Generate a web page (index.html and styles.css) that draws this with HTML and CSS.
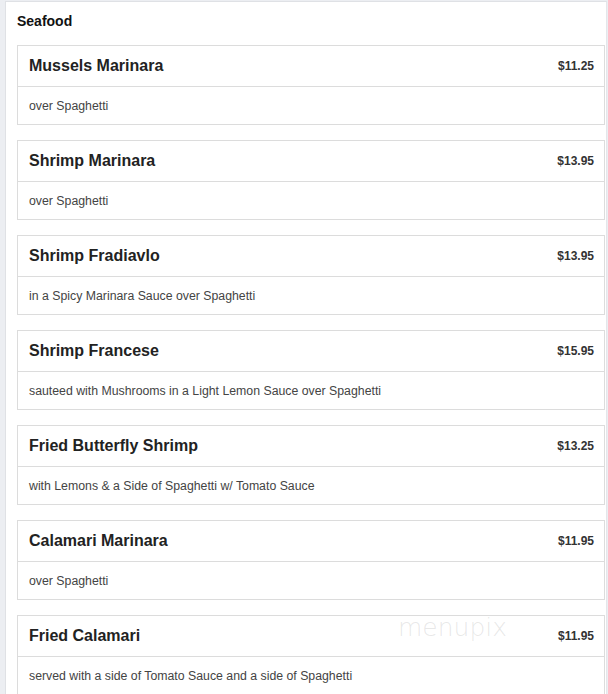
FILE: index.html
```html
<!DOCTYPE html>
<html>
<head>
<meta charset="utf-8">
<link rel="stylesheet" href="styles.css">
</head>
<body>
<div class="page">
  <div class="panel">
    <h2 class="section-title">Seafood</h2>
    <div class="items">
      <div class="card">
        <div class="card-head"><span class="name">Mussels Marinara</span><span class="price">$11.25</span></div>
        <div class="card-body">over Spaghetti</div>
      </div>
      <div class="card">
        <div class="card-head"><span class="name">Shrimp Marinara</span><span class="price">$13.95</span></div>
        <div class="card-body">over Spaghetti</div>
      </div>
      <div class="card">
        <div class="card-head"><span class="name">Shrimp Fradiavlo</span><span class="price">$13.95</span></div>
        <div class="card-body">in a Spicy Marinara Sauce over Spaghetti</div>
      </div>
      <div class="card">
        <div class="card-head"><span class="name">Shrimp Francese</span><span class="price">$15.95</span></div>
        <div class="card-body">sauteed with Mushrooms in a Light Lemon Sauce over Spaghetti</div>
      </div>
      <div class="card">
        <div class="card-head"><span class="name">Fried Butterfly Shrimp</span><span class="price">$13.25</span></div>
        <div class="card-body">with Lemons &amp; a Side of Spaghetti w/ Tomato Sauce</div>
      </div>
      <div class="card">
        <div class="card-head"><span class="name">Calamari Marinara</span><span class="price">$11.95</span></div>
        <div class="card-body">over Spaghetti</div>
      </div>
      <div class="card">
        <div class="card-head"><span class="name">Fried Calamari</span><span class="price">$11.95</span></div>
        <div class="card-body">served with a side of Tomato Sauce and a side of Spaghetti</div>
      </div>
    </div>
    <div class="watermark">menupix</div>
  </div>
</div>
</body>
</html>
```
FILE: styles.css
```css
html, body {
  margin: 0;
  padding: 0;
  background: #eceef2;
  font-family: "Liberation Sans", Arial, sans-serif;
  height: 694px;
  overflow: hidden;
}
.page {
  padding: 1px 1px 0 5px;
}
.panel {
  position: relative;
  background: #fff;
  border-top: 1px solid #dfe1e5;
  border-left: 1px solid #dfe1e5;
  border-right: 1px solid #e4e6ea;
  padding: 0 1px 0 11px;
  min-height: 700px;
}
.section-title {
  margin: 0;
  padding: 10px 0 0 0;
  height: 33px;
  box-sizing: border-box;
  font-size: 14px;
  line-height: 18px;
  font-weight: bold;
  color: #111;
}
.items {
  padding-top: 10px;
  display: flex;
  flex-direction: column;
  gap: 15px;
}
.card {
  border: 1px solid #dcdcdc;
  background: #fff;
}
.card-head {
  height: 40px;
  display: flex;
  align-items: center;
  justify-content: space-between;
  padding: 0 10px 0 11px;
  border-bottom: 1px solid #dcdcdc;
}
.name {
  font-size: 16px;
  font-weight: bold;
  color: #222;
}
.price {
  font-size: 12px;
  font-weight: bold;
  color: #333;
}
.card-body {
  height: 37px;
  display: flex;
  align-items: center;
  padding: 0 11px;
  font-size: 12.3px;
  color: #444;
}
.watermark {
  position: absolute;
  left: 392px;
  top: 611px;
  font-family: "DejaVu Sans", sans-serif;
  font-weight: 200;
  font-size: 25px;
  color: rgba(150, 150, 150, 0.22);
  pointer-events: none;
}
```
